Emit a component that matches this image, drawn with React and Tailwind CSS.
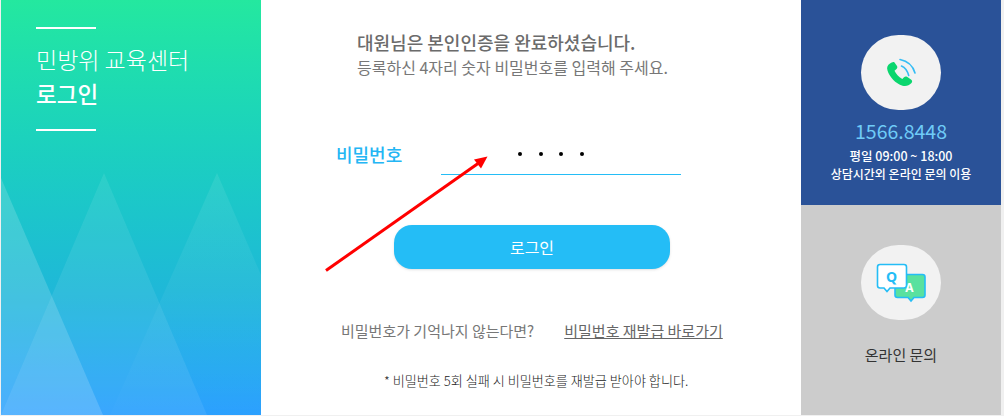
const font = "font-['Noto_Sans_CJK_KR','Noto_Sans',sans-serif]"

function Peaks() {
  return (
    <svg className="absolute inset-0 w-full h-full" viewBox="0 0 260 415" preserveAspectRatio="none">
      <defs>
        <linearGradient id="peakFade" x1="0" y1="0" x2="0" y2="1">
          <stop offset="0%" stopColor="#fff" stopOpacity="0.08" />
          <stop offset="100%" stopColor="#fff" stopOpacity="0.01" />
        </linearGradient>
      </defs>
      <polygon points="103,173 0,415 206,415" fill="#fff" fillOpacity="0.08" />
      <polygon points="216,173 109,415 260,415 260,275" fill="url(#peakFade)" />
      <polygon points="0,178 0,415 102,415" fill="#fff" fillOpacity="0.16" />
    </svg>
  )
}

function PhoneIcon() {
  return (
    <svg width="30" height="30" viewBox="0 0 30 30" fill="none">
      <path d="M4 5.5 C1.5 7 0.5 9.5 1.5 12.5 C3.5 19 9.5 25.5 16.5 27.7 C20 28.7 23 27.5 25.5 25 C26.5 23.8 26.3 22.5 25 21.5 L21 18.8 C20 18.2 19 18.3 18 19.2 L16.3 21 C12.5 19 10 16 8.5 12.8 L10.5 11 C11.5 10 11.5 9 11 8 L8.5 4.5 C7.5 3.3 5.5 4.5 4 5.5 Z" fill="#0bd66e" />
      <path d="M14 1.5 C21.5 3 27 8 29 15" stroke="#35bdf5" strokeWidth="1.6" strokeLinecap="round" />
      <path d="M15.5 8 C19 9.5 21.5 13 22.7 17.5" stroke="#35bdf5" strokeWidth="1.6" strokeLinecap="round" />
    </svg>
  )
}

function QnaIcon() {
  return (
    <svg width="50" height="40" viewBox="0 0 50 40" fill="none">
      <path d="M21 11.5 H46.5 Q49 11.5 49 14 V32 Q49 34.5 46.5 34.5 H38 L35 38 L32 34.5 H21.5 Q19 34.5 19 32 V14 Q19 11.5 21 11.5 Z" fill="#59e19f" stroke="#24bdf6" strokeWidth="1.6" />
      <path d="M4 1.5 H28 Q30.5 1.5 30.5 4 V22.5 Q30.5 25 28 25 H14 L11 28.5 L8 25 H4 Q1.5 25 1.5 22.5 V4 Q1.5 1.5 4 1.5 Z" fill="#fff" stroke="#24bdf6" strokeWidth="1.6" />
      <text x="15.5" y="18.5" textAnchor="middle" fontSize="14" fontWeight="700" fill="#24bdf6" fontFamily="Noto Sans">Q</text>
      <text x="33.5" y="29" textAnchor="middle" fontSize="12" fontWeight="700" fill="#fff" fontFamily="Noto Sans">A</text>
    </svg>
  )
}

export default function App() {
  return (
    <div className={`relative w-[1004px] h-[416px] overflow-hidden bg-[#f0f0f0] pl-px pr-[3px] pb-px flex ${font}`}>
      {/* left banner */}
      <div className="relative w-[260px] shrink-0 bg-linear-to-b from-[#24e89f] via-[#1fb8d8] via-70% to-[#2a9fff] pl-[35px] pt-[27px] text-white">
        <Peaks />
        <div className="relative">
          <div className="w-[60px] h-0.5 bg-white" />
          <p className="mt-[13px] text-[23px] leading-[34px] font-light">민방위 교육센터</p>
          <p className="text-[22.5px] leading-[34px] font-medium">로그인</p>
          <div className="mt-[19px] w-[60px] h-0.5 bg-white" />
        </div>
      </div>

      {/* login form */}
      <div className="flex-1 bg-white flex flex-col">
        <div className="pl-[96px] pt-[30px]">
          <p className="text-lg leading-[25px] font-medium text-[#6b6b6b]">대원님은 본인인증을 완료하셨습니다.</p>
          <p className="text-base leading-[25px] text-[#777]">등록하신 4자리 숫자 비밀번호를 입력해 주세요.</p>
        </div>
        <div className="flex items-end mt-[54px] pl-[75px]">
          <span className="w-[105px] text-lg leading-[26px] font-medium text-[#24b6f4] pb-2">비밀번호</span>
          <div className="w-[240px] h-[41px] border-b border-[#24bdf6] pl-[77px] flex items-center gap-[16.6px]">
            <span className="w-1 h-1 rounded-full bg-black" />
            <span className="w-1 h-1 rounded-full bg-black" />
            <span className="w-1 h-1 rounded-full bg-black" />
            <span className="w-1 h-1 rounded-full bg-black" />
          </div>
        </div>
        <button className="mt-[50px] ml-[133px] w-[276px] h-11 rounded-[18px] bg-[#24bdf6] shadow-sm text-white text-base">로그인</button>
        <div className="mt-[50px] pl-[80px] flex text-[15px] leading-6 text-[#777]">
          <span>비밀번호가 기억나지 않는다면?</span>
          <a className="ml-[30px] underline text-[#666]">비밀번호 재발급 바로가기</a>
        </div>
        <p className="mt-[28px] pl-[123px] text-[13.1px] leading-5 font-light text-[#222]">* 비밀번호 5회 실패 시 비밀번호를 재발급 받아야 합니다.</p>
      </div>

      {/* contact */}
      <div className="w-[200px] shrink-0 flex flex-col">
        <div className="h-[205px] bg-[#2a5298] flex flex-col items-center pt-[35px] text-white">
          <div className="w-20 h-[75px] rounded-full bg-[#f2f2f2] flex items-center justify-center">
            <PhoneIcon />
          </div>
          <p className="mt-[9px] text-[19.5px] leading-6 text-[#6fcbf7]">1566.8448</p>
          <p className="mt-[4px] text-[12.5px] leading-[18px] font-medium">평일 09:00 ~ 18:00</p>
          <p className="text-xs leading-[18px] font-medium">상담시간외 온라인 문의 이용</p>
        </div>
        <div className="flex-1 bg-[#cccccc] flex flex-col items-center pt-10 text-[#333]">
          <div className="w-20 h-[75px] rounded-full bg-[#f2f2f2] flex items-center justify-center">
            <QnaIcon />
          </div>
          <p className="mt-[23px] text-[15px] leading-6">온라인 문의</p>
        </div>
      </div>

      {/* red annotation arrow */}
      <svg className="absolute inset-0 pointer-events-none" width="1004" height="416">
        <line x1="326" y1="270.5" x2="478" y2="163.5" stroke="#ff0000" strokeWidth="3" />
        <polygon points="487.5,156.5 481,168.5 474,159.5" fill="#ff0000" />
      </svg>
    </div>
  )
}
